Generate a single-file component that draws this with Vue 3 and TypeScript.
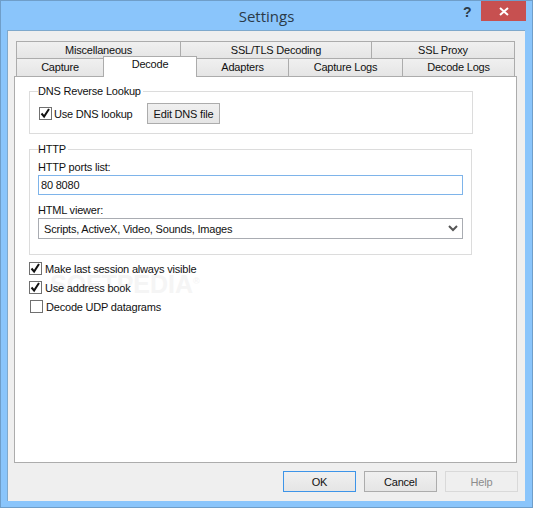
<script setup lang="ts">
const row1 = [
  { label: 'Miscellaneous', width: 165 },
  { label: 'SSL/TLS Decoding', width: 192 },
  { label: 'SSL Proxy', width: 144 },
]
const row2 = [
  { label: 'Capture', width: 88, active: false },
  { label: 'Decode', width: 94, active: true },
  { label: 'Adapters', width: 93, active: false },
  { label: 'Capture Logs', width: 115, active: false },
  { label: 'Decode Logs', width: 113, active: false },
]
</script>

<template>
  <div class="window">
    <header class="titlebar">
      <span class="title">Settings</span>
      <span class="help-glyph">?</span>
      <span class="close">
        <svg width="10" height="9" viewBox="0 0 10 9"><path d="M1 1l8 7M9 1L1 8" stroke="#fff" stroke-width="2" fill="none" /></svg>
      </span>
    </header>
    <main class="client">
      <div class="tabs">
        <div class="tab-row">
          <div v-for="t in row1" :key="t.label" class="tab" :style="{ width: t.width + 'px' }">{{ t.label }}</div>
        </div>
        <div class="tab-row">
          <div
            v-for="t in row2"
            :key="t.label"
            class="tab"
            :class="{ active: t.active }"
            :style="{ width: t.width + 'px' }"
          >{{ t.label }}</div>
        </div>
      </div>
      <section class="page">
        <fieldset class="group dns">
          <legend>DNS Reverse Lookup</legend>
          <div class="dns-row">
            <label class="check dns-check">
              <span class="box">
                <svg width="11" height="11" viewBox="0 0 11 11"><path d="M1.5 5.5l2.6 3 4.9-7.5" stroke="#111" stroke-width="2" fill="none" /></svg>
              </span>
              <span>Use DNS lookup</span>
            </label>
            <button class="btn edit">Edit DNS file</button>
          </div>
        </fieldset>
        <fieldset class="group http">
          <legend>HTTP</legend>
          <div class="field-label first">HTTP ports list:</div>
          <div class="input">80 8080</div>
          <div class="field-label second">HTML viewer:</div>
          <div class="select">
            <span>Scripts, ActiveX, Video, Sounds, Images</span>
            <svg width="10" height="7" viewBox="0 0 10 7"><path d="M1 1l4 4 4-4" stroke="#555" stroke-width="2" fill="none" /></svg>
          </div>
        </fieldset>
        <div class="checks">
          <label class="check">
            <span class="box">
              <svg width="11" height="11" viewBox="0 0 11 11"><path d="M1.5 5.5l2.6 3 4.9-7.5" stroke="#111" stroke-width="2" fill="none" /></svg>
            </span>
            <span>Make last session always visible</span>
          </label>
          <label class="check">
            <span class="box">
              <svg width="11" height="11" viewBox="0 0 11 11"><path d="M1.5 5.5l2.6 3 4.9-7.5" stroke="#111" stroke-width="2" fill="none" /></svg>
            </span>
            <span>Use address book</span>
          </label>
          <label class="check indented">
            <span class="box"></span>
            <span>Decode UDP datagrams</span>
          </label>
        </div>
        <div class="watermark">SOFTPEDIA<sup>®</sup></div>
      </section>
      <footer class="footer">
        <button class="btn default">OK</button>
        <button class="btn">Cancel</button>
        <button class="btn disabled">Help</button>
      </footer>
    </main>
  </div>
</template>

<style>
html, body { margin: 0; padding: 0; background: #8ac4fa; }
</style>

<style scoped>
.window {
  box-sizing: border-box;
  width: 533px;
  height: 508px;
  background: #8ac5fb;
  border: 1px solid #6f9ec9;
  display: flex;
  flex-direction: column;
  font-family: "Liberation Sans", Arial, sans-serif;
  font-size: 11px;
  letter-spacing: -0.2px;
  color: #111;
  overflow: hidden;
}
.titlebar {
  height: 29px;
  flex: none;
  position: relative;
  display: flex;
  justify-content: center;
}
.title {
  font-family: "Open Sans", "Noto Sans", sans-serif;
  font-size: 15px;
  letter-spacing: 0;
  line-height: 30px;
  color: #2b3a48;
}
.help-glyph {
  position: absolute;
  left: 462px;
  top: 2px;
  font-family: "Liberation Sans", sans-serif;
  font-size: 14px;
  font-weight: 700;
  line-height: 18px;
  color: #2c3b48;
}
.close {
  position: absolute;
  left: 480px;
  top: 0;
  width: 45px;
  height: 20px;
  background: #c75050;
  display: flex;
  align-items: center;
  justify-content: center;
}
.client {
  box-sizing: border-box;
  width: 518px;
  height: 471px;
  margin-left: 6px;
  background: #efefef;
  border-top: 1px solid #7fa9cc;
  border-left: 1px solid #7fa9cc;
  display: flex;
  flex-direction: column;
  padding: 10px 0 0 7px;
  position: relative;
}
.tabs {
  flex: none;
  margin-left: 1px;
}
.tab-row {
  display: flex;
}
.tab {
  box-sizing: border-box;
  height: 17px;
  flex: none;
  background: linear-gradient(#f0f0f0, #e5e5e5);
  border: 1px solid #acacac;
  border-bottom: 0;
  margin-right: -1px;
  text-align: center;
  line-height: 16px;
  color: #111;
}
.tab:last-child { margin-right: 0; }
.tab-row:last-child .tab { height: 18px; line-height: 17px; }
.tab.active {
  height: 21px !important;
  margin-top: -2px;
  margin-bottom: -1px;
  background: #fff;
  position: relative;
  z-index: 2;
  line-height: 15px !important;
}
.page {
  box-sizing: border-box;
  width: 503px;
  height: 387px;
  margin-left: -1px;
  background: #fff;
  border: 1px solid #acacac;
  padding: 7px 0 0 14px;
  position: relative;
}
.group {
  box-sizing: border-box;
  margin: 0;
  border: 1px solid #dcdcdc;
  padding: 0 8px;
  width: 444px;
}
.group legend {
  padding: 0 2px 0 0;
  margin-left: 0;
  line-height: 14px;
}
.dns {
  height: 50px;
}
.dns-row {
  display: flex;
  align-items: center;
  margin-top: 5px;
}
.check {
  display: flex;
  align-items: center;
  gap: 3px;
  height: 19px;
}
.check.indented { margin-left: 1px; }
.dns-check {
  margin-left: 1px;
  gap: 2px;
  width: 108px;
}
.box {
  box-sizing: border-box;
  width: 13px;
  height: 13px;
  border: 1px solid #707070;
  background: #fff;
  display: flex;
  align-items: center;
  justify-content: center;
  flex: none;
}
.btn {
  box-sizing: border-box;
  width: 73px;
  height: 21px;
  padding: 0;
  font: inherit;
  letter-spacing: inherit;
  color: #111;
  background: linear-gradient(#f0f0f0, #e5e5e5);
  border: 1px solid #acacac;
}
.btn.default { border-color: #3d94e8; }
.btn.disabled { color: #8c8c8c; background: #efefef; border-color: #d9d9d9; }
.http {
  width: 443px;
  height: 113px;
  margin-top: 8px;
}
.field-label {
  line-height: 14px;
}
.field-label.first { margin-top: 4px; }
.field-label.second { margin-top: 8px; }
.input, .select {
  box-sizing: border-box;
  width: 425px;
  background: #fff;
  display: flex;
  align-items: center;
}
.input {
  height: 20px;
  margin-top: 1px;
  border: 1px solid #7eb4ea;
  padding-left: 2px;
}
.select {
  height: 21px;
  margin-top: 1px;
  border: 1px solid #a9acb2;
  padding: 0 4px 0 5px;
  justify-content: space-between;
}
.checks {
  margin-top: 4px;
  display: flex;
  flex-direction: column;
}
.watermark {
  position: absolute;
  left: 35px;
  top: 188px;
  font-size: 25px;
  font-weight: 700;
  letter-spacing: 0;
  color: #f5f5f5;
  line-height: 32px;
  z-index: 0;
  pointer-events: none;
}
.watermark sup { font-size: 9px; }
.group, .checks { position: relative; z-index: 1; }
.footer {
  display: flex;
  gap: 8px;
  margin-left: 268px;
  margin-top: 8px;
}
</style>
